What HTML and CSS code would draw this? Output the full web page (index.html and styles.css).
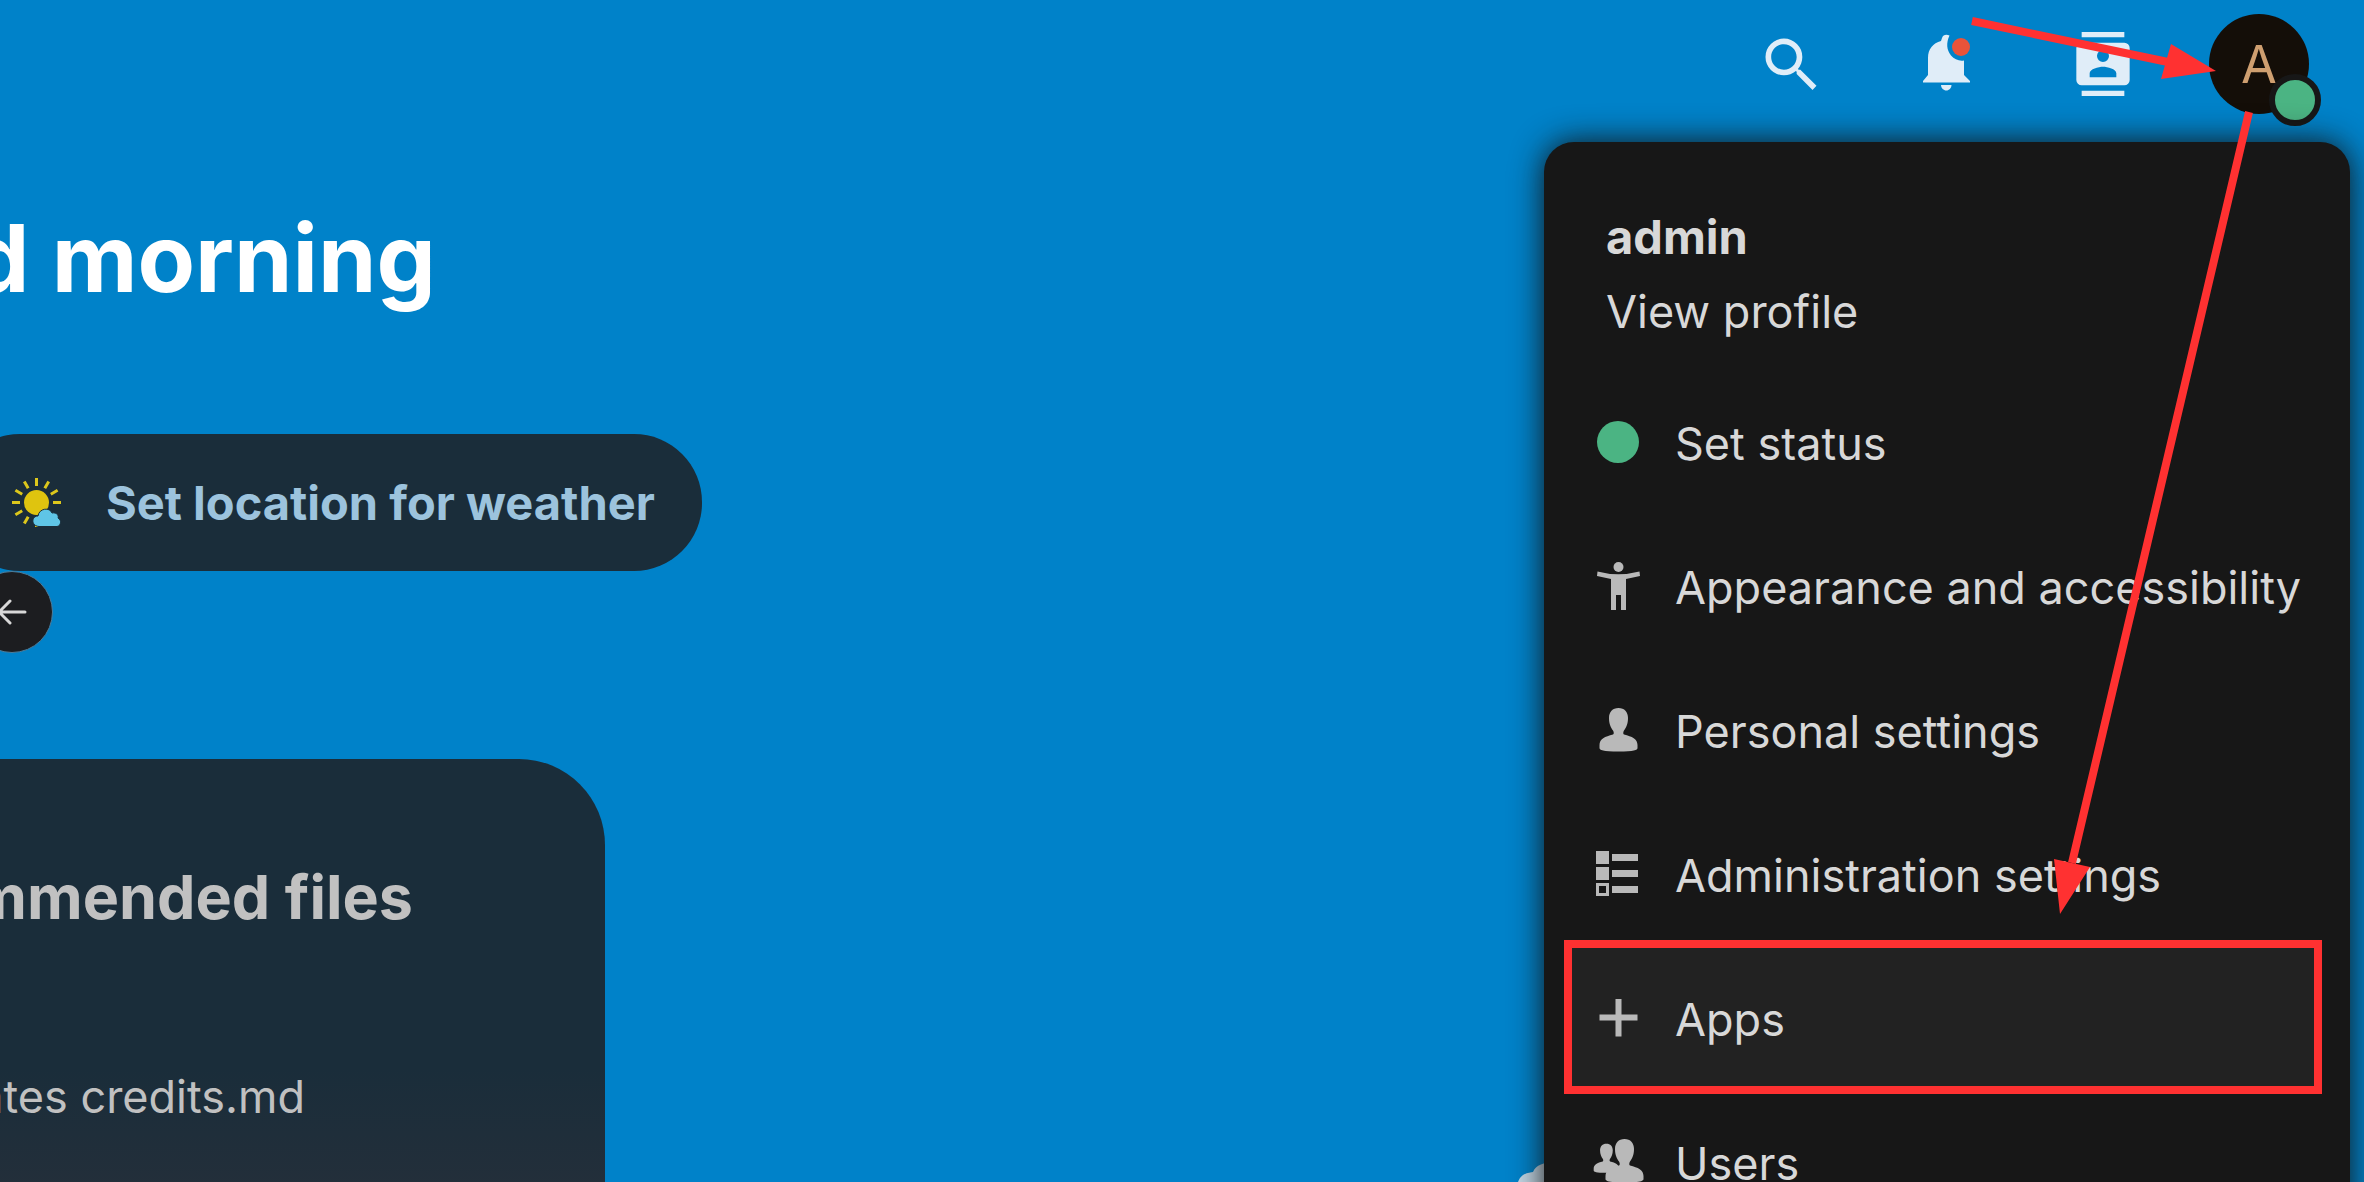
FILE: index.html
```html
<!DOCTYPE html>
<html lang="en">
<head>
<meta charset="utf-8">
<title>Dashboard</title>
<link rel="stylesheet" href="styles.css">
</head>
<body>
<header class="topbar">
  <button class="topbar-button" aria-label="Search">
    <svg class="icon-header" viewBox="0 0 24 24"><path d="M9.5,3A6.5,6.5 0 0,1 16,9.5C16,11.11 15.41,12.59 14.44,13.73L14.71,14L15.300,14L21,19.700L19.600,21.200L14,15.5V14.71L13.73,14.44C12.59,15.41 11.11,16 9.5,16A6.5,6.5 0 0,1 3,9.5A6.5,6.5 0 0,1 9.5,3M9.5,5C7,5 5,7 5,9.5C5,12 7,14 9.5,14C12,14 14,12 14,9.5C14,7 12,5 9.5,5Z"/></svg>
  </button>
  <button class="topbar-button" aria-label="Notifications">
    <svg class="icon-header" viewBox="0 0 68 68"><path d="M29 8C30 5 33 4 36.500 5.500C33 13 33.500 20 38 25.500C41.500 29.500 46 31.300 51 30.500V45L57 51V52.500H10V51L15 45V28C15 19 20 13 28 11Z"/><path d="M28 55H38.500C38.500 58 36 60.500 33.300 60.500S28 58 28 55Z"/><circle class="unread" cx="48" cy="17" r="9"/></svg>
  </button>
  <button class="topbar-button" aria-label="Contacts">
    <svg class="icon-contacts" viewBox="0 0 24 24"><path d="M20,0H4V2H20V0M4,24H20V22H4V24M20,4H4A2,2 0 0,0 2,6V18A2,2 0 0,0 4,20H20A2,2 0 0,0 22,18V6A2,2 0 0,0 20,4M12,6.750A2.250,2.250 0 0,1 14.250,9A2.250,2.250 0 0,1 12,11.250A2.250,2.250 0 0,1 9.750,9A2.250,2.250 0 0,1 12,6.750M17,17H7V15.500C7,13.830 10.330,13 12,13C13.670,13 17,13.830 17,15.500V17Z"/></svg>
  </button>
  <button class="topbar-button" aria-label="Settings menu">
    <span class="avatar">A<span class="avatar-status"></span></span>
  </button>
</header>

<main class="dashboard">
  <h1 class="greeting">Good morning</h1>
  <button class="weather">
    <svg class="weather-icon" viewBox="0 0 50 50">
      <g class="rays"><path d="M24.500 0V8M24.500 41V49M0 24.500H8M41 24.500H49M12.300 3.400L16.200 10.200M36.700 3.400L32.800 10.200M3.400 12.300L10.200 16.200M45.600 12.300L38.800 16.200M3.400 36.700L10.200 32.800M12.300 45.600L16.200 38.800"/></g>
      <circle class="sun" cx="24.500" cy="24.500" r="12.500"/>
      <path class="cloud" d="M27 48.500C19 48 19 38 26 38C27 30 38 29 40 35C45 34 47 38 46 40C50 42 49 48 45 48.500Z"/>
    </svg>
    Set location for weather
  </button>
  <button class="back" aria-label="Back">
    <svg class="back-icon" viewBox="0 0 32 32"><path d="M29 16H3M14 5L3 16L14 27"/></svg>
  </button>
  <section class="card">
    <h2 class="card-title">Recommended files</h2>
    <a class="card-file" href="#">Templates credits.md</a>
  </section>
</main>

<svg class="backdrop-cloud" viewBox="0 0 40 20"><path d="M0 20C4 10 12 11 15 10C18 3 25 0 40 0V20Z"/></svg>

<nav class="menu" aria-label="Settings menu">
  <a class="profile" href="#"><strong class="profile-name">admin</strong><span>View profile</span></a>
  <ul class="menu-list">
    <li><button class="menu-item"><svg class="menu-icon" viewBox="0 0 48 48"><circle class="online" cx="24" cy="23" r="21"/></svg>Set status</button></li>
    <li><a class="menu-item" href="#"><svg class="menu-icon" viewBox="0 0 48 48"><circle cx="24.500" cy="4" r="5"/><path d="M3.500 8.500Q24 14 45.500 8.500L46 13L32 16V47H27V32H22V47H17V16L3 13Z"/></svg>Appearance and accessibility</a></li>
    <li><a class="menu-item" href="#"><svg class="menu-icon" viewBox="0 0 48 48"><path id="person" d="M24.500 1C30.500 1 34 5 34 11C34 17 32 21 30 23.500C29 25 29 27 30 27.500C38 29.500 43.500 32 43.500 38V41C43.500 43 40 44.500 24.500 44.500S5.500 43 5.500 41V38C5.500 32 11 29.500 19 27.500C20 27 20 25 19 23.500C17 21 15 17 15 11C15 5 18.500 1 24.500 1Z"/></svg>Personal settings</a></li>
    <li><a class="menu-item" href="#"><svg class="menu-icon" viewBox="0 0 48 48"><path fill-rule="evenodd" d="M2 0H15V13H2ZM2 16H15V29H2ZM2 32H15V45H2ZM5 35V42H12V35ZM18 3H44V10H18ZM18 19H44V26H18ZM18 35H44V42H18Z"/></svg>Administration settings</a></li>
    <li><a class="menu-item marked" href="#"><svg class="menu-icon" viewBox="0 0 48 48"><path d="M21.500 4H27.500V19.500H43.500V25.500H27.500V41.500H21.500V25.500H5.500V19.500H21.500Z"/></svg>Apps</a></li>
    <li><a class="menu-item" href="#"><svg class="menu-icon" viewBox="0 0 48 48"><use href="#person" transform="translate(-4 4) scale(.67)"/><use href="#person" x="6" y="-1"/></svg>Users</a></li>
  </ul>
</nav>

<svg class="arrows" viewBox="0 0 420 930" aria-hidden="true">
  <path class="shaft" d="M28 21L224 62M305 112L128 863"/>
  <path class="head" d="M272 71L227 44L217 79ZM116 914L110 859L146 867Z"/>
</svg>
</body>
</html>
```
FILE: styles.css
```css
* { box-sizing: border-box; }

body {
  position: relative;
  height: 100vh;
  margin: 0;
  overflow: hidden;
  background: #0082c9;
  color: #d8d8d8;
  font-family: Inter, "Liberation Sans", sans-serif;
  font-size: 45px;
}

button {
  padding: 0;
  border: 0;
  background: none;
  color: inherit;
  font: inherit;
  text-align: left;
}

a { color: inherit; text-decoration: none; }

.topbar {
  display: flex;
  justify-content: flex-end;
  height: 128px;
  padding-right: 27px;
}

.topbar-button {
  display: flex;
  align-items: center;
  justify-content: center;
  width: 156px;
}

.icon-header, .icon-contacts { width: 68px; height: 68px; fill: #e0edf8; }
.icon-contacts { width: 64px; height: 64px; }
.unread { fill: #e9533a; }

.avatar {
  position: relative;
  display: flex;
  align-items: center;
  justify-content: center;
  width: 100px;
  height: 100px;
  border-radius: 50%;
  background: #140e08;
  color: #cf9f70;
  font-size: 52px;
}

.avatar-status {
  position: absolute;
  right: -12px;
  bottom: -12px;
  width: 52px;
  height: 52px;
  border: 6px solid #171717;
  border-radius: 50%;
  background: #4bb483;
}

.dashboard {
  display: flex;
  flex-direction: column;
  align-items: flex-start;
}

.greeting {
  display: flex;
  justify-content: flex-end;
  width: 436px;
  margin: 70px 0 116px;
  color: #fff;
  font-size: 94px;
  line-height: 120px;
  white-space: nowrap;
}

.weather {
  display: flex;
  align-items: center;
  gap: 44px;
  width: 750px;
  height: 137px;
  margin-left: -48px;
  padding-left: 60px;
  border-radius: 68px;
  background: #1a2d3a;
  color: #9cc3dd;
  font-size: 47px;
  font-weight: 700;
  white-space: nowrap;
}

.weather-icon { flex: none; width: 50px; height: 50px; }
.rays { stroke: #dcc71c; stroke-width: 3; }
.sun { fill: #dfc40f; }
.cloud { fill: #5fc5e6; stroke: #1a2d3a; stroke-width: 1; }

.back {
  display: flex;
  align-items: center;
  justify-content: center;
  width: 82px;
  height: 82px;
  margin-left: -29px;
  border: 1px solid #4c7d9c;
  border-radius: 50%;
  background: #1c1d20;
}

.back-icon {
  width: 32px;
  height: 32px;
  fill: none;
  stroke: #d8d8d8;
  stroke-width: 3;
  stroke-linecap: round;
}

.card {
  display: flex;
  flex-direction: column;
  width: 605px;
  height: 500px;
  margin-top: 106px;
  padding-top: 98px;
  border-top-right-radius: 86px;
  background: linear-gradient(#1a2d3a 310px, #242f3a 440px);
  color: #c1c1c1;
}

.card-title, .card-file {
  display: flex;
  justify-content: flex-end;
  margin: 0;
  line-height: 80px;
  white-space: nowrap;
}

.card-title { width: 413px; margin-bottom: 120px; font-size: 61px; }
.card-file { width: 305px; }

.backdrop-cloud {
  position: absolute;
  right: 806px;
  bottom: 0;
  width: 40px;
  height: 20px;
  fill: #c4d8e6;
}

.menu {
  position: absolute;
  top: 142px;
  right: 14px;
  width: 806px;
  padding: 57px 28px 20px 20px;
  border-radius: 30px;
  background: #171717;
  box-shadow: 0 0 32px #141414;
}

.profile {
  display: flex;
  flex-direction: column;
  padding: 0 42px 22px;
  line-height: 75px;
}

.profile-name { font-size: 47px; }

.menu-list { margin: 0; padding: 0; list-style: none; }

.menu-item {
  position: relative;
  display: flex;
  align-items: center;
  gap: 33px;
  width: 100%;
  height: 144px;
  padding-left: 30px;
  white-space: nowrap;
}

.menu-icon {
  flex: none;
  width: 48px;
  height: 48px;
  overflow: visible;
  fill: #b9b9b9;
}

.online { fill: #4bb483; }

.marked { background: #222; }

.marked::after {
  content: "";
  position: absolute;
  inset: -7px 0 -3px;
  border: 8px solid #ff3131;
}

.arrows {
  position: absolute;
  top: 0;
  right: 0;
  width: 420px;
  height: 930px;
  pointer-events: none;
}

.shaft { fill: none; stroke: #ff3131; stroke-width: 8; }
.head { fill: #ff3131; }
```
